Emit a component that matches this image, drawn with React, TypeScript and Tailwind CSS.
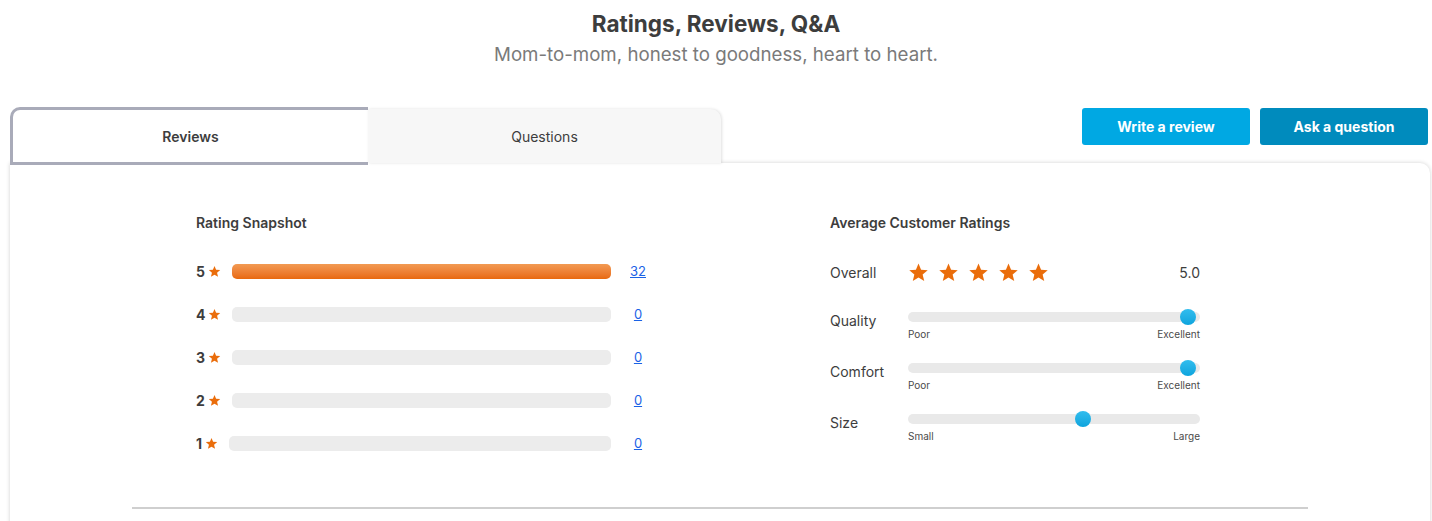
import React from "react";

const FONT = { fontFamily: "Inter, 'Noto Sans', sans-serif" };

function Star({ size = 14, className = "" }: { size?: number; className?: string }) {
  return (
    <svg width={size} height={size} viewBox="0 0 24 24" className={className}>
      <path
        d="M12 1.8l2.95 7.1 7.6.55-5.83 4.95 1.83 7.45L12 17.8l-6.55 4.05 1.83-7.45L1.45 9.45l7.6-.55z"
        fill="#ea6d0b"
      />
    </svg>
  );
}

function SnapRow({ n, count, full }: { n: number; count: number; full?: boolean }) {
  return (
    <div className="flex items-center h-[15px]">
      <span className="text-[14px] font-bold text-[#3d3d3d] leading-none">{n}</span>
      <Star size={13} className="ml-[3px] shrink-0" />
      <div
        className={
          "ml-[11px] h-[15px] flex-1 rounded-[5px] " +
          (full ? "bg-gradient-to-b from-[#f29a52] to-[#e8690a]" : "bg-[#ececec]")
        }
      />
      <div className="w-[16px] ml-[19px] flex justify-center">
        <a className="text-[13px] text-[#1a62e6] underline leading-none">{count}</a>
      </div>
    </div>
  );
}

function Slider({ label, pos, left, right }: { label: string; pos: number; left: string; right: string }) {
  return (
    <div className="flex items-start">
      <div className="w-[78px] text-[14px] text-[#3d3d3d] -mt-[2px]">{label}</div>
      <div className="flex-1">
        <div className="relative h-[10px] rounded-full bg-[#e9e9e9]">
          <div
            className="absolute top-1/2 -translate-y-1/2 -translate-x-1/2 w-[16px] h-[16px] rounded-full bg-gradient-to-b from-[#31bdee] to-[#0ba4dd]"
            style={{ left: `${pos}%` }}
          />
        </div>
        <div className="flex justify-between text-[10px] text-[#4a4a4a] mt-[7px] leading-none">
          <span>{left}</span>
          <span>{right}</span>
        </div>
      </div>
    </div>
  );
}

export default function App() {
  return (
    <div className="w-[1432px] h-[521px] overflow-hidden bg-white" style={FONT}>
      <div className="text-center pt-[10px]">
        <div className="text-[22.5px] font-bold text-[#3d3d3d] leading-[28px]">Ratings, Reviews, Q&amp;A</div>
        <div className="text-[18.7px] text-[#7a7a7a] leading-[26px] mt-[4px]">
          Mom-to-mom, honest to goodness, heart to heart.
        </div>
      </div>

      <div className="flex items-start mt-[39px] pl-[10px] pr-[4px]">
        <div className="flex w-[712px] h-[58px]">
          <div className="w-[358px] h-[58px] border-l-[3px] border-t-[3px] border-b-[3px] border-[#a9abb9] rounded-tl-[10px] bg-white flex items-center justify-center text-[14px] font-semibold text-[#3d3d3d]">
            Reviews
          </div>
          <div className="w-[353px] h-[54px] mt-[2px] bg-[#f7f7f7] rounded-tr-[10px] shadow-[1px_0_3px_rgba(0,0,0,0.12)] flex items-center justify-center text-[14px] text-[#3d3d3d]">
            Questions
          </div>
        </div>
        <div className="flex-1" />
        <div className="flex gap-[10px] mt-[1px]">
          <button className="w-[168px] h-[37px] rounded-[3px] bg-[#00a8e3] text-white text-[14px] font-bold">
            Write a review
          </button>
          <button className="w-[168px] h-[37px] rounded-[3px] bg-[#008bbd] text-white text-[14px] font-bold">
            Ask a question
          </button>
        </div>
      </div>

      <div className="ml-[10px] w-[1420px] h-[400px] -mt-[2px] bg-white rounded-tr-[10px] shadow-[0_0_4px_rgba(0,0,0,0.18)]">
        <div className="flex pt-[53px] pl-[186px]">
          <div className="w-[450px]">
            <div className="text-[14px] font-semibold text-[#3d3d3d] leading-none">Rating Snapshot</div>
            <div className="mt-[34px] flex flex-col gap-[28px]">
              <SnapRow n={5} count={32} full />
              <SnapRow n={4} count={0} />
              <SnapRow n={3} count={0} />
              <SnapRow n={2} count={0} />
              <SnapRow n={1} count={0} />
            </div>
          </div>
          <div className="w-[370px] ml-[184px]">
            <div className="text-[14px] font-semibold text-[#3d3d3d] leading-none">Average Customer Ratings</div>
            <div className="flex items-center mt-[30px] h-[24px]">
              <div className="w-[78px] text-[14px] text-[#3d3d3d]">Overall</div>
              <div className="flex gap-[9px]">
                {[0, 1, 2, 3, 4].map((i) => (
                  <Star key={i} size={21} />
                ))}
              </div>
              <div className="flex-1 text-right text-[14px] text-[#3d3d3d]">5.0</div>
            </div>
            <div className="mt-[28px] flex flex-col gap-[24px]">
              <Slider label="Quality" pos={96} left="Poor" right="Excellent" />
              <Slider label="Comfort" pos={96} left="Poor" right="Excellent" />
              <Slider label="Size" pos={60} left="Small" right="Large" />
            </div>
          </div>
        </div>
        <div className="mx-[122px] mt-[56px] h-[2px] bg-[#cfcfcf]" />
      </div>
    </div>
  );
}
